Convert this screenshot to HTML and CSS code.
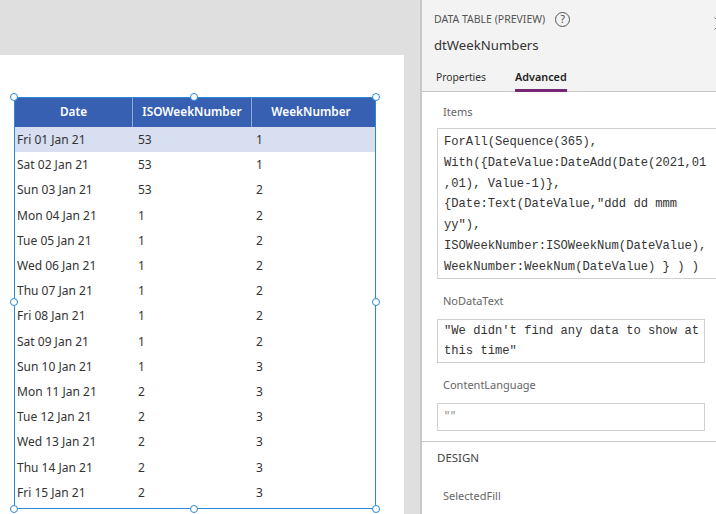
FILE: index.html
```html
<!DOCTYPE html>
<html>
<head>
<meta charset="utf-8">
<link rel="stylesheet" href="styles.css">
</head>
<body>
<div class="app">
  <div class="stage">
    <div class="canvas">
      <div class="frame">
        <div class="grid">
          <div class="row head">
            <div class="cell c1">Date</div>
            <div class="cell c2">ISOWeekNumber</div>
            <div class="cell c3">WeekNumber</div>
          </div>
          <div class="row sel"><div class="cell c1">Fri 01 Jan 21</div><div class="cell c2">53</div><div class="cell c3">1</div></div>
          <div class="row"><div class="cell c1">Sat 02 Jan 21</div><div class="cell c2">53</div><div class="cell c3">1</div></div>
          <div class="row"><div class="cell c1">Sun 03 Jan 21</div><div class="cell c2">53</div><div class="cell c3">2</div></div>
          <div class="row"><div class="cell c1">Mon 04 Jan 21</div><div class="cell c2">1</div><div class="cell c3">2</div></div>
          <div class="row"><div class="cell c1">Tue 05 Jan 21</div><div class="cell c2">1</div><div class="cell c3">2</div></div>
          <div class="row"><div class="cell c1">Wed 06 Jan 21</div><div class="cell c2">1</div><div class="cell c3">2</div></div>
          <div class="row"><div class="cell c1">Thu 07 Jan 21</div><div class="cell c2">1</div><div class="cell c3">2</div></div>
          <div class="row"><div class="cell c1">Fri 08 Jan 21</div><div class="cell c2">1</div><div class="cell c3">2</div></div>
          <div class="row"><div class="cell c1">Sat 09 Jan 21</div><div class="cell c2">1</div><div class="cell c3">2</div></div>
          <div class="row"><div class="cell c1">Sun 10 Jan 21</div><div class="cell c2">1</div><div class="cell c3">3</div></div>
          <div class="row"><div class="cell c1">Mon 11 Jan 21</div><div class="cell c2">2</div><div class="cell c3">3</div></div>
          <div class="row"><div class="cell c1">Tue 12 Jan 21</div><div class="cell c2">2</div><div class="cell c3">3</div></div>
          <div class="row"><div class="cell c1">Wed 13 Jan 21</div><div class="cell c2">2</div><div class="cell c3">3</div></div>
          <div class="row"><div class="cell c1">Thu 14 Jan 21</div><div class="cell c2">2</div><div class="cell c3">3</div></div>
          <div class="row"><div class="cell c1">Fri 15 Jan 21</div><div class="cell c2">2</div><div class="cell c3">3</div></div>
        </div>
        <span class="handle h-tl"></span>
        <span class="handle h-tc"></span>
        <span class="handle h-tr"></span>
        <span class="handle h-ml"></span>
        <span class="handle h-mr"></span>
        <span class="handle h-bl"></span>
        <span class="handle h-bc"></span>
        <span class="handle h-br"></span>
      </div>
    </div>
  </div>
  <div class="panel">
    <div class="phead">
      <div class="ptitle"><span>DATA TABLE (PREVIEW)</span><span class="help">?</span></div>
      <div class="pname">dtWeekNumbers</div>
      <div class="tabs">
        <div class="tab">Properties</div>
        <div class="tab active">Advanced</div>
      </div>
      <svg class="close" width="13" height="13" viewBox="0 0 13 13"><path d="M0.5 0.5 L12.5 12.5 M12.5 0.5 L0.5 12.5" stroke="#666" stroke-width="1" fill="none"/></svg>
    </div>
    <div class="pbody">
      <div class="label first">Items</div>
      <div class="box code wide"><div>ForAll(Sequence(365),</div><div>With({DateValue:DateAdd(Date(2021,01</div><div>,01), Value-1)},</div><div>{Date:Text(DateValue,"ddd dd mmm</div><div>yy"),</div><div>ISOWeekNumber:ISOWeekNum(DateValue),</div><div>WeekNumber:WeekNum(DateValue) } ) )</div></div>
      <div class="label">NoDataText</div>
      <div class="box code nodata"><div>"We didn't find any data to show at</div><div>this time"</div></div>
      <div class="label">ContentLanguage</div>
      <div class="box code short"><div class="quote">""</div></div>
    </div>
    <div class="design">
      <div class="dtitle">DESIGN</div>
      <div class="label sf">SelectedFill</div>
    </div>
  </div>
</div>
</body>
</html>
```

FILE: styles.css
```css
html, body {
  margin: 0;
  padding: 0;
  width: 716px;
  height: 514px;
  overflow: hidden;
  background: #dfdfdf;
  font-family: "Segoe UI", "Noto Sans", sans-serif;
}

.app {
  display: flex;
  height: 514px;
}

.stage {
  width: 420px;
  flex: none;
  padding-top: 55px;
  box-sizing: border-box;
}

.canvas {
  width: 404px;
  height: 459px;
  background: #ffffff;
  padding: 42px 0 0 14px;
  box-sizing: border-box;
}

.frame {
  position: relative;
  width: 362px;
  height: 412px;
  border: 1px solid #2b88d8;
  box-sizing: border-box;
}

.grid {
  height: 100%;
  overflow: hidden;
}

.row {
  display: grid;
  grid-template-columns: 117px 119px 1fr;
  height: 25.2px;
  align-items: center;
  font-size: 12px;
  color: #333333;
}

.row.head {
  height: 29px;
  background: #3860b2;
  color: #ffffff;
  font-weight: 600;
  font-size: 11.8px;
}

.row.head .cell {
  text-align: center;
  padding: 0 0 2px 0;
  height: 29px;
  line-height: 27px;
  box-sizing: border-box;
}

.row.head .c2,
.row.head .c3 {
  border-left: 1px solid rgba(255, 255, 255, 0.45);
}

.row.head .c3 {
  padding-right: 5px;
}

.row.sel {
  background: #d7dff0;
}

.cell {
  white-space: nowrap;
  overflow: hidden;
}

.c1 { padding-left: 2px; }
.c2 { padding-left: 6px; }
.c3 { padding-left: 5px; }

.handle {
  position: absolute;
  width: 6px;
  height: 6px;
  border: 1.5px solid #2b88d8;
  border-radius: 50%;
  background: #ffffff;
}

.h-tl { left: -5px; top: -5px; }
.h-tc { left: 175px; top: -5px; }
.h-tr { right: -5px; top: -5px; }
.h-ml { left: -5px; top: 200px; }
.h-mr { right: -5px; top: 200px; }
.h-bl { left: -5px; bottom: -5px; }
.h-bc { left: 175px; bottom: -5px; }
.h-br { right: -5px; bottom: -5px; }

.panel {
  flex: none;
  width: 310px;
  border-left: 2px solid #c8c8c8;
  background: #ffffff;
  height: 514px;
}

.phead {
  position: relative;
  background: #f3f3f3;
  height: 92px;
  border-bottom: 1px solid #c8c8c8;
  box-sizing: border-box;
  padding: 11px 0 0 12px;
}

.ptitle {
  display: flex;
  align-items: center;
  gap: 10px;
  height: 16px;
  font-size: 10.5px;
  color: #555555;
}

.help {
  width: 13px;
  height: 13px;
  border: 1px solid #555555;
  border-radius: 50%;
  font-size: 10px;
  line-height: 13px;
  text-align: center;
  color: #444444;
}

.pname {
  margin-top: 8px;
  height: 20px;
  line-height: 20px;
  font-size: 13.2px;
  color: #333333;
}

.tabs {
  display: flex;
  gap: 29px;
  margin-top: 14px;
  padding-left: 2px;
}

.tab {
  font-size: 10.3px;
  line-height: 16px;
  color: #333333;
  padding-bottom: 4px;
  border-bottom: 3px solid transparent;
}

.tab.active {
  font-size: 10.8px;
  font-weight: 600;
  color: #222222;
  border-bottom-color: #742774;
}

.close {
  position: absolute;
  left: 292px;
  top: 17px;
}

.pbody {
  padding: 0 0 10px 15px;
  border-bottom: 1px solid #c8c8c8;
}

.label {
  font-size: 11px;
  color: #666666;
  padding-left: 6px;
  line-height: 16px;
  padding-top: 14px;
  padding-bottom: 10px;
}

.label.first {
  padding-top: 12px;
  padding-bottom: 8px;
}

.box {
  width: 268px;
  border: 1px solid #d0d0d0;
  box-sizing: border-box;
  padding: 0 6px;
  background: #ffffff;
}

.box.wide {
  width: 290px;
  padding-top: 3px;
  line-height: 20.8px;
}

.box.nodata {
  padding-top: 1px;
  line-height: 20.5px;
}

.code {
  font-family: "Liberation Mono", "DejaVu Sans Mono", monospace;
  font-size: 12.15px;
  line-height: 21px;
  color: #333333;
  white-space: pre;
}

.short {
  height: 28px;
  line-height: 26px;
}

.quote {
  color: #888888;
  font-size: 10px;
}

.design {
  padding-left: 15px;
}

.dtitle {
  font-size: 11.5px;
  color: #444444;
  line-height: 16px;
  padding-top: 8px;
}

.label.sf {
  padding-top: 22px;
}
```
